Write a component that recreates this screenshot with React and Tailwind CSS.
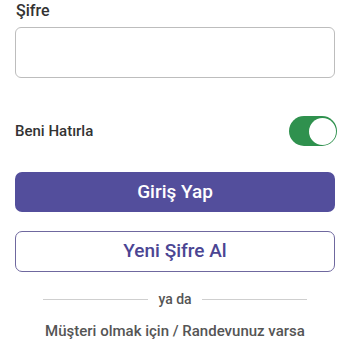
import React from "react";

export default function App() {
  const font = { fontFamily: 'Roboto, "Open Sans", sans-serif' };
  return (
    <div className="w-[350px] h-[350px] bg-white px-[15px] overflow-hidden" style={font}>
      <div className="pt-[1px] pl-[1px] text-[16px] leading-[20px] font-medium text-[#333333]">Şifre</div>
      <div className="mt-[6px] h-[51px] rounded-[6px] border border-[#bdbdbd] bg-white"></div>
      <div className="mt-[38px] h-[30px] flex items-center justify-between">
        <span className="text-[15px] font-medium text-[#333333]">Beni Hatırla</span>
        <div className="w-[48px] h-[30px] rounded-full bg-[#2f914e] flex items-center justify-end p-[1.5px] -mr-[2px]">
          <div className="w-[27px] h-[27px] rounded-full bg-white"></div>
        </div>
      </div>
      <button className="mt-[26px] w-full h-[40px] rounded-[7px] bg-[#534e9c] text-white text-[19px] font-medium flex items-center justify-center">
        Giriş Yap
      </button>
      <button className="mt-[19px] w-full h-[41px] rounded-[7px] border border-[#6f689f] bg-white text-[#4b4593] text-[19px] font-medium flex items-center justify-center">
        Yeni Şifre Al
      </button>
      <div className="mt-[17px] flex items-center justify-center gap-[10px] px-[28px]">
        <div className="flex-1 h-px bg-[#cfcfcf]"></div>
        <span className="text-[14px] font-medium text-[#555555] leading-[20px]">ya da</span>
        <div className="flex-1 h-px bg-[#cfcfcf]"></div>
      </div>
      <div className="mt-[12px] text-center text-[15px] font-medium text-[#555555] leading-[20px]">
        Müşteri olmak için / Randevunuz varsa
      </div>
    </div>
  );
}
